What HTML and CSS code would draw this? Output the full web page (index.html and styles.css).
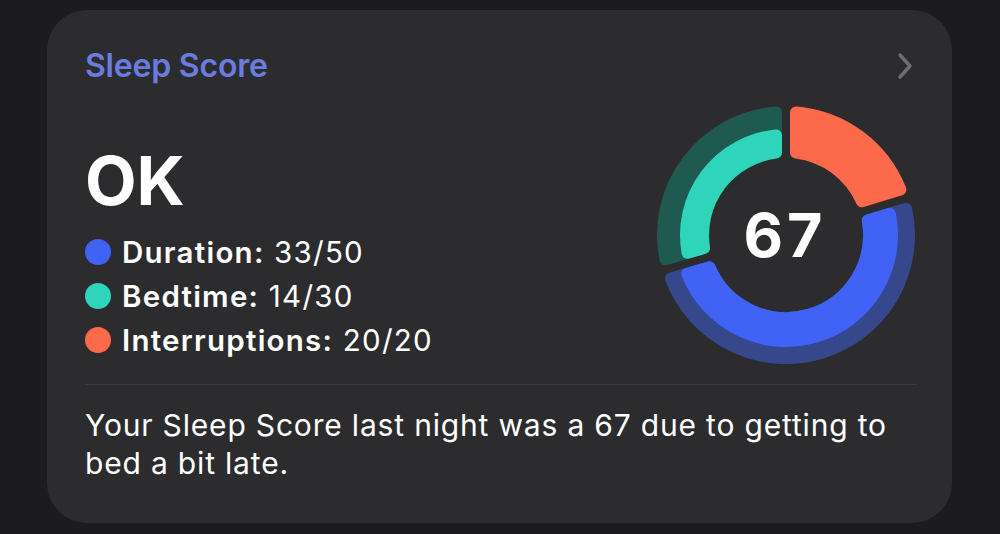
FILE: index.html
```html
<!DOCTYPE html>
<html lang="en">
<head>
<meta charset="utf-8">
<title>Sleep Score</title>
<link rel="stylesheet" href="styles.css">
</head>
<body>
<div class="card">
  <div class="header">
    <span class="title">Sleep Score</span>
    <svg class="chevron" width="16" height="28" viewBox="0 0 16 28" aria-hidden="true">
      <path d="M3 3 L13 14 L3 25" fill="none" stroke="#6e6e72" stroke-width="3.4" stroke-linecap="round" stroke-linejoin="round"/>
    </svg>
  </div>
  <div class="main">
    <div class="summary">
      <div class="rating">OK</div>
      <ul class="legend">
        <li class="row"><span class="dot dot-blue"></span><span class="label"><b>Duration:</b> 33/50</span></li>
        <li class="row"><span class="dot dot-teal"></span><span class="label"><b>Bedtime:</b> 14/30</span></li>
        <li class="row"><span class="dot dot-orange"></span><span class="label"><b>Interruptions:</b> 20/20</span></li>
      </ul>
    </div>
    <svg class="donut" width="262" height="262" viewBox="0 0 262 262">
      <g stroke-width="12" stroke-linejoin="round">
        <path class="seg faint-green" d="M10.40,155.18 A123,123 0 0 1 121,8.41 L121,48.60 A83,83 0 0 0 49.04,144.10 Z"/>
        <path class="seg teal" d="M32.60,148.81 A100,100 0 0 1 121,31.50 L121,48.60 A83,83 0 0 0 49.04,144.10 Z"/>
        <path class="seg orange" d="M141,8.41 A123,123 0 0 1 245.31,85.59 L206.87,97.35 A83,83 0 0 0 141,48.60 Z"/>
        <path class="seg faint-blue" d="M251.16,104.72 A123,123 0 0 1 15.91,174.40 L54.55,163.32 A83,83 0 0 0 212.72,116.47 Z"/>
        <path class="seg blue" d="M234.84,109.71 A106,106 0 0 1 32.32,169.70 L54.55,163.32 A83,83 0 0 0 212.72,116.47 Z"/>
      </g>
      <text class="score" x="130" y="153" text-anchor="middle">67</text>
    </svg>
  </div>
  <div class="divider"></div>
  <p class="note">Your Sleep Score last night was a 67 due to getting to bed a bit late.</p>
</div>
</body>
</html>
```
FILE: styles.css
```css
html, body {
  margin: 0;
  padding: 0;
}
body {
  background: #1c1c1e;
  width: 1000px;
  height: 534px;
  overflow: hidden;
  font-family: Inter, "Noto Sans", "Liberation Sans", sans-serif;
  color: #ffffff;
}
.card {
  box-sizing: border-box;
  margin: 10px 0 0 47px;
  width: 905px;
  height: 513px;
  border-radius: 40px;
  background: #2c2c2e;
  padding: 36px 35px 0 38px;
  display: flex;
  flex-direction: column;
}
.header {
  display: flex;
  justify-content: space-between;
  align-items: center;
  height: 40px;
}
.title {
  font-size: 32px;
  line-height: 40px;
  font-weight: 600;
  color: #6b7ce0;
  letter-spacing: -0.2px;
}
.chevron {
  margin-right: 4px;
  display: block;
}
.main {
  margin-top: 18px;
  display: flex;
  justify-content: space-between;
  align-items: flex-start;
}
.summary {
  padding-top: 43px;
}
.rating {
  font-size: 67px;
  line-height: 67px;
  font-weight: 700;
  letter-spacing: 0;
}
.legend {
  list-style: none;
  margin: 16px 0 0 0;
  padding: 0;
}
.row {
  display: flex;
  align-items: center;
  height: 44px;
  gap: 11px;
}
.dot {
  width: 26px;
  height: 26px;
  border-radius: 50%;
  flex: none;
}
.dot-blue { background: #4063f5; }
.dot-teal { background: #2fd5bb; }
.dot-orange { background: #fd694b; }
.label {
  font-size: 29.5px;
  line-height: 44px;
  font-weight: 400;
  letter-spacing: 1.25px;
}
.label b {
  font-weight: 600;
}
.donut {
  display: block;
  flex: none;
}
.seg.faint-green { fill: #1f5a51; stroke: #1f5a51; }
.seg.teal { fill: #2fd5bb; stroke: #2fd5bb; }
.seg.orange { fill: #fd694b; stroke: #fd694b; }
.seg.faint-blue { fill: #37478c; stroke: #37478c; }
.seg.blue { fill: #4063f5; stroke: #4063f5; }
.score {
  font-family: Inter, "Noto Sans", sans-serif;
  font-size: 61px;
  font-weight: 700;
  letter-spacing: 4px;
  fill: #ffffff;
}
.divider {
  margin-top: 18px;
  height: 1px;
  background: #3b3b3e;
}
.note {
  margin: 21px 0 0 0;
  font-size: 30px;
  line-height: 38px;
  font-weight: 400;
  letter-spacing: 0.82px;
}
```
